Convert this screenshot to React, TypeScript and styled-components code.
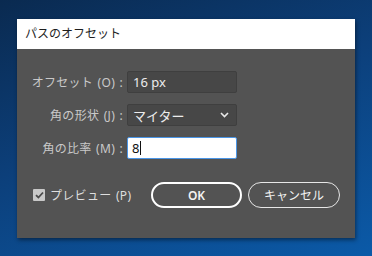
import React from "react";
import styled, { createGlobalStyle } from "styled-components";

const Global = createGlobalStyle`
  html, body {
    margin: 0;
    padding: 0;
  }
  body {
    font-family: "Noto Sans", "Noto Sans CJK JP", sans-serif;
  }
`;

const App = () => {
  return (
    <Desktop>
      <Global />
      <Dialog>
        <TitleBar>パスのオフセット</TitleBar>
        <Body>
          <Form>
            <Label>オフセット (O) :</Label>
            <Field>16 px</Field>
            <Label>角の形状 (J) :</Label>
            <Field>
              マイター
              <svg width="9" height="6" viewBox="0 0 9 6">
                <path
                  d="M1 1 L4.5 4.5 L8 1"
                  stroke="#e8e8e8"
                  strokeWidth="1.6"
                  fill="none"
                />
              </svg>
            </Field>
            <Label>角の比率 (M) :</Label>
            <Field $active>
              8<Caret />
            </Field>
          </Form>
          <Footer>
            <Check>
              <Box>
                <svg width="9" height="8" viewBox="0 0 9 8">
                  <path
                    d="M1 4.2 L3.4 6.5 L8 1.5"
                    stroke="#4a4a4a"
                    strokeWidth="1.8"
                    fill="none"
                  />
                </svg>
              </Box>
              プレビュー (P)
            </Check>
            <Button $primary>OK</Button>
            <Button>キャンセル</Button>
          </Footer>
        </Body>
      </Dialog>
    </Desktop>
  );
};

export default App;

const Desktop = styled.div`
  width: 372px;
  height: 256px;
  box-sizing: border-box;
  padding: 19px 17px;
  overflow: hidden;
  background: linear-gradient(160deg, #0a2a50 0%, #0c3f7a 45%, #0b5aa8 100%);
`;
const Dialog = styled.div`
  width: 338px;
  height: 219px;
  display: flex;
  flex-direction: column;
  background-color: #535353;
  box-shadow: 1px 2px 4px rgba(0, 0, 0, 0.45);
`;
const TitleBar = styled.div`
  height: 30px;
  background-color: #ffffff;
  color: #1e1e1e;
  font-size: 12px;
  line-height: 30px;
  padding-left: 8px;
`;
const Body = styled.div`
  flex: 1;
  display: flex;
  flex-direction: column;
  padding: 22px 0 0 0;
`;
const Form = styled.div`
  display: grid;
  grid-template-columns: 106px 110px;
  column-gap: 4px;
  row-gap: 11px;
  align-items: center;
`;
const Label = styled.div`
  text-align: right;
  color: #c9c9c9;
  font-size: 12px;
  letter-spacing: 0.3px;
  word-spacing: 1px;
  white-space: nowrap;
`;
const Field = styled.div<{ $active?: boolean }>`
  height: 22px;
  box-sizing: border-box;
  display: flex;
  align-items: center;
  justify-content: space-between;
  padding: 0 7px 0 5px;
  border-radius: 2px;
  font-size: 13px;
  color: ${(p) => (p.$active ? "#111" : "#ececec")};
  background-color: ${(p) => (p.$active ? "#ffffff" : "#474747")};
  border: 1px solid ${(p) => (p.$active ? "#4a95e6" : "#3f3f3f")};
  ${(p) => (p.$active ? "justify-content: flex-start; padding-left: 4px;" : "")}
`;
const Caret = styled.span`
  display: inline-block;
  width: 1px;
  height: 14px;
  margin-left: 1px;
  background-color: #111;
`;
const Footer = styled.div`
  display: flex;
  align-items: center;
  margin-top: 23px;
  padding-left: 16px;
`;
const Check = styled.div`
  display: flex;
  align-items: center;
  color: #dedede;
  font-size: 12px;
  letter-spacing: 0.3px;
  word-spacing: 1px;
  width: 118px;
`;
const Box = styled.div`
  width: 12px;
  height: 12px;
  border-radius: 1px;
  background-color: #c8c8c8;
  display: flex;
  align-items: center;
  justify-content: center;
  margin-right: 5px;
`;
const Button = styled.div<{ $primary?: boolean }>`
  width: ${(p) => (p.$primary ? "91px" : "92px")};
  height: 26px;
  box-sizing: border-box;
  margin-right: 6px;
  border-radius: 13px;
  border: ${(p) => (p.$primary ? "2px solid #ffffff" : "1.5px solid #e6e6e6")};
  display: flex;
  align-items: center;
  justify-content: center;
  color: #f2f2f2;
  font-size: 12px;
  font-weight: ${(p) => (p.$primary ? 600 : 400)};
`;
